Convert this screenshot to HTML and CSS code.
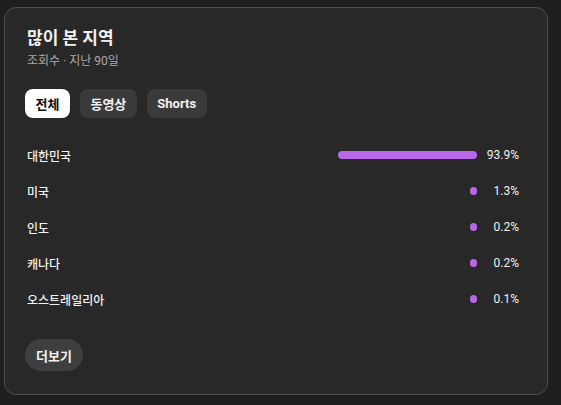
FILE: index.html
```html
<!DOCTYPE html>
<html lang="ko">
<head>
    <meta charset="UTF-8">
    <meta name="viewport" content="width=device-width, initial-scale=1.0">
    <title>많이 본 지역</title>
    <link rel="stylesheet" href="styles.css">
</head>
<body>
    <!-- 카드 -->
    <div class="card">
        <h2 class="title">많이 본 지역</h2>
        <p class="subtitle">조회수 · 지난 90일</p>

        <div class="chips">
            <button class="chip active">전체</button>
            <button class="chip">동영상</button>
            <button class="chip">Shorts</button>
        </div>

        <div class="rows">
            <div class="row">
                <span class="name">대한민국</span>
                <div class="track"><div class="fill" style="width: 93.9%"></div></div>
                <span class="pct">93.9%</span>
            </div>
            <div class="row">
                <span class="name">미국</span>
                <div class="track"><div class="fill" style="width: 1.3%"></div></div>
                <span class="pct">1.3%</span>
            </div>
            <div class="row">
                <span class="name">인도</span>
                <div class="track"><div class="fill" style="width: 0.2%"></div></div>
                <span class="pct">0.2%</span>
            </div>
            <div class="row">
                <span class="name">캐나다</span>
                <div class="track"><div class="fill" style="width: 0.2%"></div></div>
                <span class="pct">0.2%</span>
            </div>
            <div class="row">
                <span class="name">오스트레일리아</span>
                <div class="track"><div class="fill" style="width: 0.1%"></div></div>
                <span class="pct">0.1%</span>
            </div>
        </div>

        <button class="more">더보기</button>
    </div>
</body>
</html>
```

FILE: styles.css
```css
body {
    font-family: Roboto, "Noto Sans CJK KR", Arial, sans-serif;
    background-color: #1f1f1f;
    color: #f1f1f1;
    margin: 0;
    padding: 7px 0 0 4px;
}
.card {
    box-sizing: border-box;
    width: 544px;
    height: 388px;
    background: #282828;
    border: 1px solid #4d4d4d;
    border-radius: 12px;
    padding: 18px 28px 0 20px;
}
.title {
    font-size: 17px;
    font-weight: 700;
    line-height: 24px;
    margin: 0 0 0 2px;
}
.subtitle {
    font-size: 12px;
    line-height: 18px;
    color: #aaaaaa;
    margin: 2px 0 0 2px;
}
.chips {
    display: flex;
    gap: 10px;
    margin-top: 19px;
}
.chip {
    font-family: inherit;
    font-size: 13px;
    font-weight: 700;
    height: 29px;
    padding: 0 10.5px;
    border: none;
    border-radius: 8px;
    background: #3a3a3a;
    color: #f1f1f1;
}
.chip.active {
    background: #ffffff;
    color: #0f0f0f;
}
.rows {
    margin-top: 19px;
}
.row {
    display: flex;
    align-items: center;
    height: 36px;
    font-size: 12px;
    font-weight: 500;
}
.name {
    flex: 1;
    padding-left: 2px;
}
.track {
    width: 148px;
    display: flex;
    justify-content: flex-end;
}
.fill {
    height: 8px;
    min-width: 7px;
    border-radius: 4px;
    background: #b866ea;
}
.pct {
    width: 42px;
    text-align: right;
    font-weight: 400;
}
.more {
    font-family: inherit;
    font-size: 13px;
    font-weight: 700;
    height: 32px;
    padding: 0 11px;
    margin-top: 22px;
    border: none;
    border-radius: 16px;
    background: #3f3f3f;
    color: #f1f1f1;
}
```
